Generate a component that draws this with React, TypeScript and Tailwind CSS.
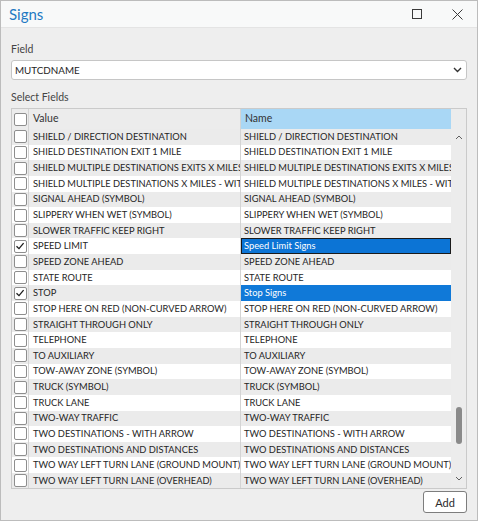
import React from 'react';

type Row = { value: string; name: string; checked?: boolean; selected?: 'focus' | 'plain' };

const rows: Row[] = [
  { value: 'SHIELD / DIRECTION DESTINATION', name: 'SHIELD / DIRECTION DESTINATION' },
  { value: 'SHIELD DESTINATION EXIT 1 MILE', name: 'SHIELD DESTINATION EXIT 1 MILE' },
  { value: 'SHIELD MULTIPLE DESTINATIONS EXITS X MILES', name: 'SHIELD MULTIPLE DESTINATIONS EXITS X MILES' },
  { value: 'SHIELD MULTIPLE DESTINATIONS X MILES - WITH ARROW', name: 'SHIELD MULTIPLE DESTINATIONS X MILES - WITH ARROW' },
  { value: 'SIGNAL AHEAD (SYMBOL)', name: 'SIGNAL AHEAD (SYMBOL)' },
  { value: 'SLIPPERY WHEN WET (SYMBOL)', name: 'SLIPPERY WHEN WET (SYMBOL)' },
  { value: 'SLOWER TRAFFIC KEEP RIGHT', name: 'SLOWER TRAFFIC KEEP RIGHT' },
  { value: 'SPEED LIMIT', name: 'Speed Limit Signs', checked: true, selected: 'focus' },
  { value: 'SPEED ZONE AHEAD', name: 'SPEED ZONE AHEAD' },
  { value: 'STATE ROUTE', name: 'STATE ROUTE' },
  { value: 'STOP', name: 'Stop Signs', checked: true, selected: 'plain' },
  { value: 'STOP HERE ON RED (NON-CURVED ARROW)', name: 'STOP HERE ON RED (NON-CURVED ARROW)' },
  { value: 'STRAIGHT THROUGH ONLY', name: 'STRAIGHT THROUGH ONLY' },
  { value: 'TELEPHONE', name: 'TELEPHONE' },
  { value: 'TO AUXILIARY', name: 'TO AUXILIARY' },
  { value: 'TOW-AWAY ZONE (SYMBOL)', name: 'TOW-AWAY ZONE (SYMBOL)' },
  { value: 'TRUCK (SYMBOL)', name: 'TRUCK (SYMBOL)' },
  { value: 'TRUCK LANE', name: 'TRUCK LANE' },
  { value: 'TWO-WAY TRAFFIC', name: 'TWO-WAY TRAFFIC' },
  { value: 'TWO DESTINATIONS - WITH ARROW', name: 'TWO DESTINATIONS - WITH ARROW' },
  { value: 'TWO DESTINATIONS AND DISTANCES', name: 'TWO DESTINATIONS AND DISTANCES' },
  { value: 'TWO WAY LEFT TURN LANE (GROUND MOUNT)', name: 'TWO WAY LEFT TURN LANE (GROUND MOUNT)' },
  { value: 'TWO WAY LEFT TURN LANE (OVERHEAD)', name: 'TWO WAY LEFT TURN LANE (OVERHEAD)' },
];

const Checkbox = ({ checked }: { checked?: boolean }) => (
  <div className="w-[13px] h-[13px] bg-white border border-[#8e8e8e] rounded-[2px] flex items-center justify-center">
    {checked && (
      <svg width="10" height="10" viewBox="0 0 10 10">
        <path d="M1.5 5.2 L4 7.6 L8.6 2.2" fill="none" stroke="#1a1a1a" strokeWidth="1.3" />
      </svg>
    )}
  </div>
);

const Chevron = ({ up }: { up?: boolean }) => (
  <svg width="8" height="5" viewBox="0 0 8 5">
    <path d={up ? 'M1 4 L4 1 L7 4' : 'M1 1 L4 4 L7 1'} fill="none" stroke="#606060" strokeWidth="1" />
  </svg>
);

const App: React.FC = () => {
  return (
    <div
      className="w-[478px] h-[521px] border border-[#bcbcbc] bg-[#eeeeee] flex flex-col text-[#2b2b2b] overflow-hidden"
      style={{ fontFamily: '"Segoe UI", Lato, "Noto Sans", sans-serif' }}
    >
      {/* Title bar */}
      <div className="h-[27px] shrink-0 bg-[#f8f9f9] border-b border-[#e4e4e4] flex items-center pl-[8px]">
        <span className="text-[15px] text-[#1f7ac3] leading-none">Signs</span>
        <div className="ml-auto flex items-center">
          <div className="w-[40px] flex justify-center">
            <div className="w-[10px] h-[10px] border border-[#3a3a3a]" />
          </div>
          <div className="w-[40px] flex justify-center">
            <svg width="11" height="11" viewBox="0 0 11 11">
              <path d="M0.5 0.5 L10.5 10.5 M10.5 0.5 L0.5 10.5" stroke="#3a3a3a" strokeWidth="1" />
            </svg>
          </div>
        </div>
      </div>

      {/* Body */}
      <div className="flex flex-col px-[10px] pt-[13px] flex-1">
        <div className="text-[10.5px] leading-4 text-[#444]">Field</div>
        <div className="mt-[3px] h-[20px] bg-white border border-[#c6c6c6] rounded-[3px] flex items-center pl-[3px] pr-[4px]">
          <span className="text-[9.8px] text-[#1e1e1e]">MUTCDNAME</span>
          <svg className="ml-auto" width="9" height="6" viewBox="0 0 9 6">
            <path d="M1 1 L4.5 4.5 L8 1" fill="none" stroke="#333" strokeWidth="1.4" />
          </svg>
        </div>
        <div className="mt-[9px] text-[10.5px] leading-4 text-[#444]">Select Fields</div>

        {/* Table */}
        <div className="mt-[3px] h-[381px] border border-[#cacaca] bg-[#efefef] flex text-[9.3px] overflow-hidden">
          <div className="flex-1 flex flex-col min-w-0">
            {/* Header */}
            <div className="h-[20px] shrink-0 flex bg-[#ececec] text-[10.5px]">
              <div className="w-[17px] shrink-0 flex items-center justify-center border-r border-[#d4d4d4]">
                <Checkbox />
              </div>
              <div className="w-[212px] shrink-0 flex items-center pl-[4px] text-[#333] border-r border-[#d4d4d4]">Value</div>
              <div className="flex-1 flex items-center pl-[4px] bg-[#a9d7f5] text-[#333]">Name</div>
            </div>
            {rows.map((r, i) => {
              const bg = i % 2 === 0 ? 'bg-[#ebebeb]' : 'bg-white';
              return (
                <div key={r.value} className={`h-[15.65px] shrink-0 flex ${bg}`}>
                  <div className="w-[17px] shrink-0 flex items-center justify-center border-r border-[#d4d4d4]">
                    <Checkbox checked={r.checked} />
                  </div>
                  <div className="w-[212px] shrink-0 flex items-center pl-[4px] whitespace-nowrap overflow-hidden border-r border-[#d4d4d4] text-[#262626]">
                    {r.value}
                  </div>
                  <div
                    className={`flex-1 min-w-0 flex items-center whitespace-nowrap overflow-hidden ${
                      r.selected === 'focus'
                        ? 'bg-[#0c74d5] text-white border border-[#1a1a1a] pl-[2px]'
                        : r.selected === 'plain'
                        ? 'bg-[#1079d8] text-white pl-[3px]'
                        : 'text-[#262626] pl-[3px]'
                    }`}
                  >
                    {r.name}
                  </div>
                </div>
              );
            })}
          </div>

          {/* Scrollbar */}
          <div className="w-[15px] shrink-0 flex flex-col bg-[#ececec]">
            <div className="h-[20px] shrink-0" />
            <div className="h-[16px] flex items-center justify-center">
              <Chevron up />
            </div>
            <div className="flex-1 flex justify-center">
              <div className="w-[6px] h-[37px] mt-[262px] rounded-full bg-[#8a8a8a]" />
            </div>
            <div className="h-[16px] flex items-center justify-center mb-[2px]">
              <Chevron />
            </div>
          </div>
        </div>

        <div className="flex justify-end mt-[2px]">
          <button className="w-[44px] h-[22px] bg-white border border-[#7d7d7d] rounded-[3px] text-[11px] text-[#2b2b2b] leading-none">
            Add
          </button>
        </div>
      </div>
    </div>
  );
};

export default App;
